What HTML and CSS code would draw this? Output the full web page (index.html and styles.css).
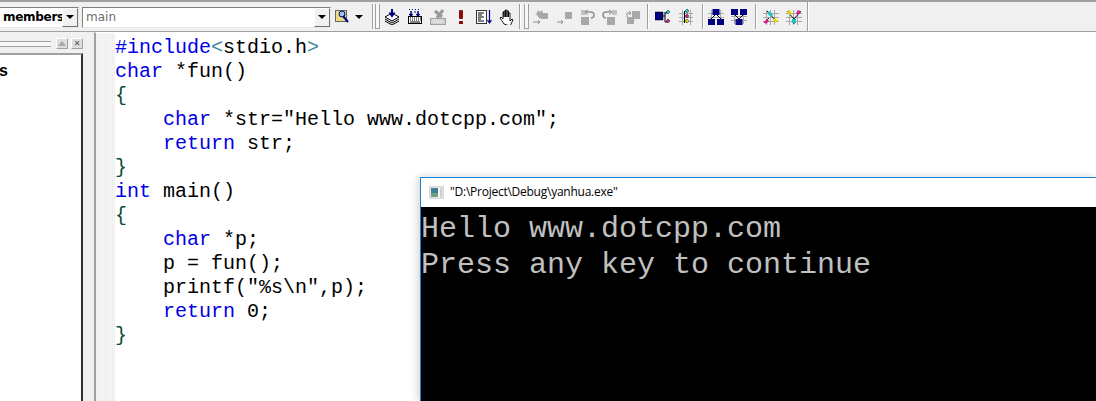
FILE: index.html
```html
<!DOCTYPE html>
<html lang="en">
<head>
<meta charset="utf-8">
<title>Visual C++ yanhua</title>
<link rel="stylesheet" href="styles.css">
</head>
<body>
<div class="app">
  <header class="toolbar">
    <div class="combo combo-members"><span class="combo-text members-text">members</span><span class="combo-btn"><i class="caret"></i></span></div>
    <div class="combo combo-main"><span class="combo-text main-text">main</span><span class="combo-btn"><i class="caret"></i></span></div>
    <div class="find-btn">
      <svg width="15" height="16" viewBox="0 0 15 16"><rect x="0.5" y="1.5" width="11" height="11" fill="#ffe95a" stroke="#666"/><path d="M1 3h10M1 5h10M1 7h10M1 9h10M1 11h10" stroke="#d8d0a0"/><circle cx="7" cy="5" r="3" fill="#9fc4e8" stroke="#000080"/><path d="M8 7l5 6" stroke="#000080" stroke-width="2"/></svg>
      <i class="caret caret-find"></i>
    </div>
    <div class="sep sep-0"></div>
    <div class="grip grip-a"></div>
    <div class="tool"><svg width="16" height="16" viewBox="0 0 16 16"><path d="M1 8l7-4 7 4-7 4z" fill="#fff" stroke="#000"/><path d="M1 10l7 4 7-4M1 12l7 4 7-4" fill="none" stroke="#000"/><path d="M8 0v6M5.500 3.500L8 7l2.500-3.500" fill="none" stroke="#000080" stroke-width="2"/></svg></div>
    <div class="tool"><svg width="16" height="16" viewBox="0 0 16 16"><rect x="1.500" y="7.500" width="13" height="7" fill="#fff" stroke="#000"/><path d="M3 9h1M5 9h1M7 9h1M9 9h1M11 9h1M13 9h1M3 11h1M5 11h1M7 11h1M9 11h1M11 11h1M13 11h1M3 13h10" stroke="#000"/><path d="M4 2v5M2.500 5l1.500 2 1.500-2M11 2v5M9.500 5l1.500 2 1.500-2" fill="none" stroke="#000080" stroke-width="1.500"/><path d="M2 0.500h1M5 0.500h1M8 0.500h1M11 0.500h1M7 3h2" stroke="#000080"/></svg></div>
    <div class="tool"><svg width="16" height="16" viewBox="0 0 16 16"><rect x="0.500" y="9.500" width="15" height="6" fill="#d0d0d0" stroke="#a0a0a0"/><path d="M2 11h1M4 11h1M6 11h1M8 11h1M10 11h1M12 11h1M3 13h9" stroke="#f0f0f0"/><path d="M5 2l7 6M13 1L7 9" stroke="#9a9a9a" stroke-width="3"/></svg></div>
    <div class="tool"><svg width="16" height="16" viewBox="0 0 16 16"><rect x="6" y="1" width="4" height="9" rx="1" fill="#8b0a14"/><rect x="6" y="12" width="4" height="3" fill="#8b0a14"/></svg></div>
    <div class="tool"><svg width="16" height="16" viewBox="0 0 16 16"><rect x="0.500" y="1.500" width="10" height="13" fill="#fff" stroke="#333"/><path d="M2 4h6M2 6h4M2 8h6M2 10h3M2 12h6" stroke="#000"/><path d="M13.500 1v12M11.500 11l2 3 2-3" fill="none" stroke="#000080" stroke-width="1.200"/></svg></div>
    <div class="tool"><svg width="16" height="16" viewBox="0 0 16 16"><path d="M5 15L1 9l1-1 2 2V3h1v5-6h1.500v6-7H8v7-6h1.500v6-4H11v8l2-2 1 1-3 6z" fill="#fff" stroke="#000" stroke-width="0.900"/></svg></div>
    <div class="sep sep-a"></div>
    <div class="grip grip-b"></div>
    <div class="tool"><svg width="16" height="16" viewBox="0 0 16 16"><path d="M5 1l2 2 2-2 1 3h5v6H9L6 9 4 6l-2-1 2-1z" fill="#a8a8a8"/><path d="M0 13h7M5 11l2 2-2 2" fill="none" stroke="#909090"/></svg></div>
    <div class="tool"><svg width="16" height="16" viewBox="0 0 16 16"><rect x="9" y="3" width="7" height="7" fill="#a8a8a8"/><path d="M1 13h6M5 11l2 2-2 2" fill="none" stroke="#909090"/></svg></div>
    <div class="tool"><svg width="16" height="16" viewBox="0 0 16 16"><rect x="2" y="8" width="8" height="8" fill="#a8a8a8"/><rect x="2" y="1" width="5" height="5" fill="#c0c0c0"/><path d="M7 3h5a2.500 2.500 0 0 1 0 6" fill="none" stroke="#909090" stroke-width="1.500"/><path d="M9 1L6 3l3 3" fill="none" stroke="#909090"/></svg></div>
    <div class="tool"><svg width="16" height="16" viewBox="0 0 16 16"><rect x="5" y="8" width="8" height="8" fill="#a8a8a8"/><rect x="10" y="1" width="5" height="5" fill="#c0c0c0"/><path d="M9 3H4a2.500 2.500 0 0 0 0 6" fill="none" stroke="#909090" stroke-width="1.500"/><path d="M7 1l3 2-3 3" fill="none" stroke="#909090"/></svg></div>
    <div class="tool"><svg width="16" height="16" viewBox="0 0 16 16"><rect x="7" y="2" width="8" height="8" fill="#a8a8a8"/><rect x="2" y="8" width="7" height="7" fill="#a8a8a8"/><path d="M2 8V4h4M4 2l2 2-2 2" fill="none" stroke="#909090"/></svg></div>
    <div class="sep sep-b"></div>
    <div class="tool"><svg width="16" height="16" viewBox="0 0 16 16"><rect x="0" y="3" width="8" height="8" fill="#000080" stroke="#000" stroke-width="0.500"/><path d="M8 7h2M10 3v10h2M10 4h2" fill="none" stroke="#000"/><path d="M13 1l2 2-2 2-2-2z" fill="#19c4c4" stroke="#222" stroke-width="0.500"/><path d="M13 10l2 2-2 2-2-2z" fill="#d81b8c" stroke="#222" stroke-width="0.500"/></svg></div>
    <div class="tool"><svg width="16" height="16" viewBox="0 0 16 16"><path d="M1 4.500h14M1 8.500h14M1 12.500h14M4.500 1v15M12.500 1v15" stroke="#a8a8a8"/><path d="M6.500 2v12" stroke="#000"/><path d="M9 0l2 2-2 2-2-2z" fill="#19c4c4" stroke="#222" stroke-width="0.500"/><path d="M9 5l2 2-2 2-2-2z" fill="#d81b8c" stroke="#222" stroke-width="0.500"/><path d="M9 10l2 2-2 2-2-2z" fill="#e8d800" stroke="#222" stroke-width="0.500"/></svg></div>
    <div class="sep sep-c"></div>
    <div class="tool"><svg width="16" height="16" viewBox="0 0 16 16"><path d="M0 4.500h16M0 8.500h16M3.500 1v14M12.500 1v14" stroke="#a8a8a8"/><path d="M8 5L3 10M8 5l5 5" stroke="#000"/><rect x="4.500" y="0" width="7" height="6" fill="#000080"/><rect x="0" y="10" width="7" height="6" fill="#000080"/><rect x="9" y="10" width="7" height="6" fill="#000080"/></svg></div>
    <div class="tool"><svg width="16" height="16" viewBox="0 0 16 16"><path d="M0 7.500h16M0 11.500h16M3.500 1v14M12.500 1v14" stroke="#a8a8a8"/><path d="M3 5l5 5M13 5l-5 5" stroke="#000"/><rect x="0" y="0" width="7" height="6" fill="#000080"/><rect x="9" y="0" width="7" height="6" fill="#000080"/><rect x="4.500" y="10" width="7" height="6" fill="#000080"/></svg></div>
    <div class="sep sep-d"></div>
    <div class="tool"><svg width="16" height="16" viewBox="0 0 16 16"><path d="M0 4.500h16M0 8.500h16M0 12.500h16M3.500 1v15M7.500 1v15M11.500 1v15" stroke="#a8a8a8"/><path d="M4 2l10 11" stroke="#111" stroke-width="1"/><path d="M1 14l5-5" stroke="#111" stroke-width="1"/><path d="M5 3l4 4" stroke="#19c4c4" stroke-width="3"/><path d="M2 14l3-3" stroke="#d81b8c" stroke-width="3"/><path d="M11 10l3 3" stroke="#e8d800" stroke-width="3"/></svg></div>
    <div class="tool"><svg width="16" height="16" viewBox="0 0 16 16"><path d="M0 4.500h16M0 8.500h16M0 12.500h16M3.500 1v15M7.500 1v15M11.500 1v15" stroke="#a8a8a8"/><path d="M1 2l7 8M15 2L8 10M8 10v5" stroke="#111"/><path d="M2 2l3 3" stroke="#e8d800" stroke-width="3"/><path d="M14 2l-3 3" stroke="#d81b8c" stroke-width="3"/><path d="M8 10v4" stroke="#19c4c4" stroke-width="4"/></svg></div>
    <div class="sep sep-e"></div>
  </header>
  <div class="workspace">
    <aside class="side">
      <div class="side-head">
        <div class="side-grip"></div>
        <span class="side-btn"><i class="up"></i></span>
        <span class="side-btn side-x">✕</span>
      </div>
      <div class="side-list"><div class="side-item">s</div></div>
    </aside>
    <main class="editor">
      <div class="gutter"></div>
<pre class="code"><span class="kw">#include</span><span class="br">&lt;</span>stdio.h<span class="br">&gt;</span>
<span class="kw">char</span> *fun()
<span class="bc">{</span>
    <span class="kw">char</span> *str="Hello www.dotcpp.com";
    <span class="kw">return</span> str;
<span class="bc">}</span>
<span class="kw">int</span> main()
<span class="bc">{</span>
    <span class="kw">char</span> *p;
    p = fun();
    printf("%s\n",p);
    <span class="kw">return</span> 0;
<span class="bc">}</span></pre>
    </main>
  </div>
  <section class="console">
    <div class="console-title">
      <svg class="console-icon" width="15" height="13" viewBox="0 0 15 13"><rect width="15" height="13" fill="#e4e4e4"/><rect x="1" y="1" width="13" height="11" fill="#f4f4f4" stroke="#b8b8b8" stroke-width="0.500"/><rect x="2" y="2" width="7" height="9" fill="#3f7f8f"/><rect x="2" y="7" width="7" height="4" fill="#6aa08a"/><rect x="11" y="2" width="2" height="9" fill="#cfcfcf"/></svg>
      <span class="console-name">"D:\Project\Debug\yanhua.exe"</span>
    </div>
<pre class="console-body">Hello www.dotcpp.com
Press any key to continue</pre>
  </section>
</div>
</body>
</html>
```
FILE: styles.css
```css
* { box-sizing: border-box; }
html, body { margin: 0; padding: 0; }
body { width: 1096px; height: 401px; overflow: hidden; background: #f0f0f0; }
.app { position: relative; width: 1096px; height: 401px; display: flex; flex-direction: column; overflow: hidden; }

.toolbar { height: 32px; flex: none; display: flex; align-items: center; background: #f0f0f0; border-top: 2px solid #a0a0a0; border-bottom: 1px solid #a0a0a0; }
.combo { height: 21px; margin-top: 1px; display: flex; align-items: center; background: #fff; border: 1px solid; border-color: #808080 #e8e8e8 #e8e8e8 #808080; overflow: hidden; }
.combo-members { width: 79px; border-left: none; }
.combo-main { width: 249px; margin-left: 3px; }
.combo-text { flex: 1; min-width: 0; overflow: hidden; white-space: nowrap; font-family: "DejaVu Sans", sans-serif; font-size: 12px; }
.members-text { font-weight: 700; color: #000; padding-left: 3px; letter-spacing: -0.3px; }
.main-text { color: #6e6e6e; padding-left: 3px; }
.combo-btn { width: 16px; height: 19px; flex: none; display: flex; align-items: center; justify-content: center; background: #f0f0f0; border: 1px solid; border-color: #fff #707070 #707070 #fff; }
.caret { display: block; width: 0; height: 0; border-left: 4px solid transparent; border-right: 4px solid transparent; border-top: 4px solid #000; }
.find-btn { width: 37px; margin-left: 4px; display: flex; align-items: center; gap: 5px; flex: none; }
.grip { width: 5px; height: 25px; flex: none; background: #f8f8f8; border: 1px solid #a0a0a0; border-top: none; }
.grip-a { margin-left: 1px; }
.grip-b { margin-left: 3px; }
.tool { width: 23px; height: 24px; flex: none; display: flex; align-items: center; justify-content: center; }
.tool svg { display: block; }
.sep { width: 2px; height: 25px; flex: none; background: #a0a0a0; border-right: 1px solid #fff; }
.sep-a { margin-left: 1px; }
.sep-b { margin: 0 2px 0 3px; }
.sep-c { margin-left: 5px; }
.sep-d { margin: 0 2px 0 5px; }
.sep-e { margin-left: 2px; height: 29px; }

.workspace { flex: 1; display: flex; min-height: 0; }
.side { width: 94px; flex: none; display: flex; flex-direction: column; padding-right: 11px; background: #f0f0f0; }
.side-head { height: 21px; flex: none; display: flex; align-items: center; gap: 3px; padding-top: 2px; }
.side-grip { flex: 1; height: 6px; border-top: 1px solid #a0a0a0; border-bottom: 1px solid #a0a0a0; background: #f8f8f8; margin-right: 2px; }
.side-btn { width: 12px; height: 11px; background: #dedede; border: 1px solid; border-color: #fff #a0a0a0 #a0a0a0 #fff; display: flex; align-items: center; justify-content: center; font-family: "DejaVu Sans", sans-serif; font-size: 8px; line-height: 1; color: #505050; }
.up { display: block; width: 0; height: 0; border-left: 4px solid transparent; border-right: 4px solid transparent; border-bottom: 5px solid #a8a8a8; }
.side-list { flex: 1; background: #fff; border-top: 2px solid #a0a0a0; border-right: 2px solid #303030; padding-top: 6px; }
.side-item { font-family: "Liberation Sans", sans-serif; font-size: 16px; line-height: 20px; color: #000; margin-left: -1px; font-weight: 700; }

.editor { flex: 1; display: flex; background: #fff; border-top: 1px solid #fff; border-left: 2px solid #a0a0a0; min-width: 0; }
.gutter { width: 19px; flex: none; background-color: #f6f6f6; background-image: linear-gradient(45deg, #e8e8e8 25%, transparent 25%, transparent 75%, #e8e8e8 75%); background-size: 2px 2px; }
.code { margin: 0; padding-top: 3px; font-family: "Liberation Mono", monospace; font-size: 20px; line-height: 24px; color: #000; }
.kw { color: #0000e6; }
.br { color: #3c8c9c; }
.bc { color: #0c4a38; }

.console { position: absolute; left: 420px; top: 177px; width: 676px; height: 224px; background: #000; border: 1px solid #1584d8; border-right: none; border-bottom: none; box-shadow: -2px 0 8px rgba(0,0,0,0.18); display: flex; flex-direction: column; }
.console-title { height: 29px; flex: none; background: #fff; display: flex; align-items: center; padding: 0 0 2px 8px; gap: 6px; }
.console-icon { display: block; flex: none; margin-top: 2px; }
.console-name { font-family: "Open Sans", sans-serif; font-size: 12px; color: #000; letter-spacing: -0.25px; }
.console-body { margin: 0; font-family: "Liberation Mono", monospace; font-size: 30px; line-height: 36px; color: #c0c0c0; background: #000; flex: 1; padding-top: 4px; }
```
